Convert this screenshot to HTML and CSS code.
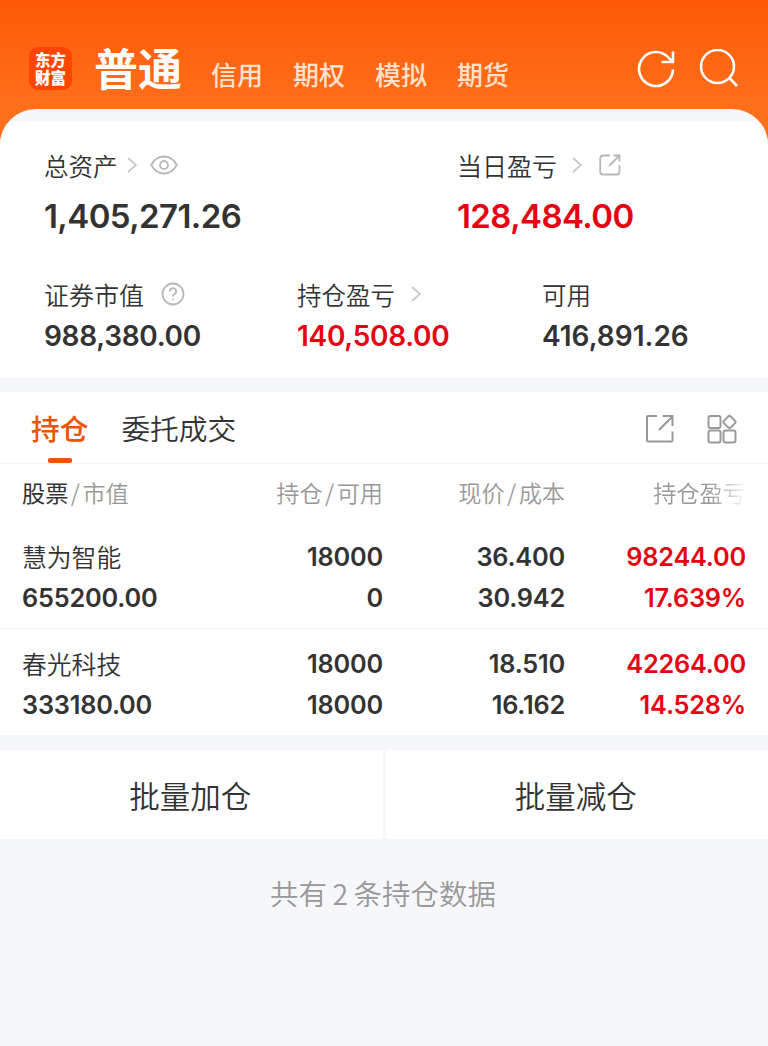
FILE: index.html
```
<!DOCTYPE html>
<html lang="zh-CN">
<head>
    <meta charset="UTF-8">
    <meta name="viewport" content="width=device-width, initial-scale=1.0">
    <title>持仓</title>
    <link rel="stylesheet" href="styles.css">
</head>
<body>
    <header>
        <div class="logo">东方<br>财富</div>
        <nav>
            <a class="current">普通</a>
            <a>信用</a>
            <a>期权</a>
            <a>模拟</a>
            <a>期货</a>
        </nav>
        <div class="header-icons">
            <svg width="40" height="40" viewBox="0 0 40 40"><path d="M37 20.500A17 17 0 1 1 33 9L36 12.500M37 2.500V13H25.500"/></svg>
            <svg width="40" height="40" viewBox="0 0 40 40"><circle cx="18.500" cy="17.500" r="16.500"/><path d="M30 28.500L38 37"/></svg>
        </div>
    </header>
    <main>
        <section class="summary">
            <div class="summary-row top">
                <div>
                    <div class="label"><span>总资产</span>
                        <svg class="arrow a1" width="10" height="16" viewBox="0 0 10 16"><path d="M1 1L9 8L1 15"/></svg>
                        <svg class="eye" width="28" height="20" viewBox="0 0 28 20"><path d="M1.2 10C4 5 8.500 1.500 14 1.500S24 5 26.800 10C24 15 19.500 18.500 14 18.500S4 15 1.200 10Z"/><circle cx="14" cy="10" r="4"/></svg>
                    </div>
                    <div class="num big">1,405,271.26</div>
                </div>
                <div>
                    <div class="label wide"><span>当日盈亏</span>
                        <svg class="arrow a2" width="10" height="16" viewBox="0 0 10 16"><path d="M1 1L9 8L1 15"/></svg>
                        <svg class="share" width="22" height="22" viewBox="0 0 22 22"><path d="M11 1.500H4Q1.200 1.500 1.200 4.500V17.500Q1.200 20.500 4 20.500H17.500Q20.500 20.500 20.500 17.500V11M10 12L20.500 1.500M14.500 1.500H20.500V7.500"/></svg>
                    </div>
                    <div class="num big red">128,484.00</div>
                </div>
            </div>
            <div class="summary-row bottom">
                <div>
                    <div class="label wide"><span>证券市值</span>
                        <svg class="help" width="24" height="24" viewBox="0 0 24 24"><circle cx="12" cy="12" r="10.500"/><path d="M9 9.500A3.100 3.100 0 1 1 13.500 12Q12 12.800 12 14.500M12 16.500V18.200"/></svg>
                    </div>
                    <div class="num">988,380.00</div>
                </div>
                <div>
                    <div class="label"><span>持仓盈亏</span>
                        <svg class="arrow a3" width="10" height="16" viewBox="0 0 10 16"><path d="M1 1L9 8L1 15"/></svg>
                    </div>
                    <div class="num red">140,508.00</div>
                </div>
                <div>
                    <div class="label"><span>可用</span></div>
                    <div class="num available">416,891.26</div>
                </div>
            </div>
        </section>

        <section class="positions">
            <div class="tabs">
                <a class="tab active">持仓</a>
                <a class="tab">委托成交</a>
                <div class="tab-icons">
                    <svg width="30" height="30" viewBox="0 0 30 30"><path d="M12 2H3Q2 2 2 3V26.500Q2 27.500 3 27.500H26.500Q27.500 27.500 27.500 26.500V17.500M14 16L27.500 2.500M17.500 2H27.500V12"/></svg>
                    <svg width="30" height="30" viewBox="0 0 30 30"><rect x="1.500" y="2" width="12" height="12" rx="2"/><rect x="1.500" y="16.500" width="12" height="12" rx="2"/><rect x="16.500" y="16.500" width="12" height="12" rx="2"/><rect x="17.700" y="3.200" width="9.600" height="9.600" rx="2" transform="rotate(45 22.500 8)"/></svg>
                </div>
            </div>
            <div class="grid head">
                <div><b>股票</b><i>/</i>市值</div>
                <div>持仓<i>/</i>可用</div>
                <div>现价<i>/</i>成本</div>
                <div class="fade">持仓盈亏</div>
            </div>
            <div class="grid row">
                <div><span class="name">慧为智能</span><span>655200.00</span></div>
                <div><span>18000</span><span>0</span></div>
                <div><span>36.400</span><span>30.942</span></div>
                <div class="red"><span>98244.00</span><span>17.639%</span></div>
            </div>
            <div class="grid row">
                <div><span class="name">春光科技</span><span>333180.00</span></div>
                <div><span>18000</span><span>18000</span></div>
                <div><span>18.510</span><span>16.162</span></div>
                <div class="red"><span>42264.00</span><span>14.528%</span></div>
            </div>
        </section>

        <div class="actions">
            <a>批量加仓</a>
            <a>批量减仓</a>
        </div>
        <p class="total">共有<span>2</span>条持仓数据</p>
    </main>
</body>
</html>
```

FILE: styles.css
```
* {
    box-sizing: border-box;
}
body {
    margin: 0;
    width: 768px;
    height: 1046px;
    overflow: hidden;
    font-family: "Noto Sans CJK SC", sans-serif;
    font-weight: 350;
    color: #333;
    background: linear-gradient(to bottom, #ff5a05 0, #ff6f1c 109px, #ff6f1c 100%);
}
svg {
    display: block;
    flex: none;
    fill: none;
    stroke: #b8b8b8;
    stroke-width: 1.8;
}
header {
    height: 109px;
    padding-left: 29px;
    display: flex;
    align-items: flex-start;
}
.logo {
    width: 43px;
    height: 43px;
    margin-top: 47px;
    padding-top: 3px;
    border-radius: 9px;
    background: #ff4500;
    color: #fff;
    font-size: 15.500px;
    font-weight: 900;
    line-height: 18px;
    text-align: center;
}
nav {
    display: flex;
    margin-left: 22px;
}
nav a {
    margin: 54px 0 0 30px;
    font-size: 26px;
    line-height: 40px;
    font-weight: 500;
    color: #ffe0cc;
}
nav a.current {
    margin: 37px -1px 0 0;
    font-size: 44px;
    line-height: 60px;
    font-weight: bold;
    color: #fff;
}
.header-icons {
    display: flex;
    gap: 23px;
    margin: 49px 29px 0 auto;
}
.header-icons svg {
    stroke: #fff;
    stroke-width: 2.600;
}
main {
    height: 937px;
    border-radius: 36px 36px 0 0;
    overflow: hidden;
    background: #f5f7fa;
    padding-top: 13px;
}
.summary {
    height: 256px;
    padding: 25px 0 0 44px;
    background: #fff;
}
.summary-row {
    display: grid;
}
.summary-row.top {
    grid-template-columns: 413px 1fr;
}
.summary-row.bottom {
    grid-template-columns: 253px 245px 1fr;
    margin-top: 40px;
}
.label {
    display: flex;
    align-items: center;
    height: 36px;
    font-size: 24.500px;
}
.label.wide {
    font-size: 25px;
}
.arrow {
    stroke: #c8c8c8;
}
.a1 {
    margin-left: 9px;
}
.a2 {
    margin-left: 15px;
}
.a3 {
    margin-left: 16px;
}
.eye {
    margin-left: 13px;
}
.share {
    margin-left: 17px;
}
.help {
    margin-left: 17px;
}
.num {
    margin-top: 6px;
    font-family: Inter, sans-serif;
    font-size: 28px;
    font-weight: 600;
    letter-spacing: -0.3px;
    line-height: 36px;
}
.num.available {
    letter-spacing: 0;
}
.num.big {
    margin-top: 13px;
    font-size: 33px;
    letter-spacing: -0.6px;
    line-height: 40px;
}
.red {
    color: #e60012;
}
.positions {
    margin-top: 14px;
    background: #fff;
}
.tabs {
    display: flex;
    height: 72px;
    padding: 0 31px 0 31px;
    border-bottom: 1px solid #f2f3f5;
}
.tab {
    position: relative;
    margin-right: 33px;
    font-size: 28.700px;
    line-height: 72px;
}
.tab.active {
    color: #ea5504;
    font-weight: 500;
}
.tab.active::after {
    content: "";
    position: absolute;
    left: 17px;
    bottom: 0;
    width: 24px;
    height: 5px;
    border-radius: 2px;
    background: #ea5504;
}
.tab-icons {
    display: flex;
    gap: 32px;
    margin: 22px 0 0 auto;
}
.tab-icons svg {
    stroke: #999;
    stroke-width: 2;
}
.grid {
    display: grid;
    grid-template-columns: 200px 161px 182px 181px;
    padding: 0 22px;
}
.grid > div {
    text-align: right;
}
.grid > div:first-child {
    text-align: left;
}
.head {
    height: 58px;
    font-size: 23.200px;
    line-height: 56px;
    color: #999;
}
.head b {
    font-weight: 400;
    color: #333;
}
.head i {
    display: inline-block;
    width: 14px;
    text-align: center;
    font-style: normal;
}
.fade {
    -webkit-mask-image: linear-gradient(to right, #000 145px, transparent 183px);
    mask-image: linear-gradient(to right, #000 145px, transparent 183px);
}
.row {
    height: 107px;
    padding-top: 15px;
    border-bottom: 1px solid #f2f3f5;
    font-family: Inter, sans-serif;
    font-size: 25.300px;
    font-weight: 600;
    letter-spacing: -0.2px;
    line-height: 40.500px;
}
.row:last-child {
    height: 106px;
    border-bottom: none;
}
.row span {
    display: block;
}
.row .name {
    height: 40.500px;
    font-family: "Noto Sans CJK SC", sans-serif;
    font-size: 24.800px;
    font-weight: 350;
    letter-spacing: 0;
    line-height: 39px;
}
.actions {
    display: grid;
    grid-template-columns: 1fr 1fr;
    gap: 3px;
    margin-top: 15px;
}
.actions a {
    height: 89px;
    padding-right: 2px;
    background: #fff;
    font-size: 30.500px;
    line-height: 90px;
    text-align: center;
}
.total {
    margin: 33px 2px 0 0;
    font-size: 28.500px;
    line-height: 42px;
    text-align: center;
    color: #999;
}
.total span {
    margin: 0 5.500px;
}
```
